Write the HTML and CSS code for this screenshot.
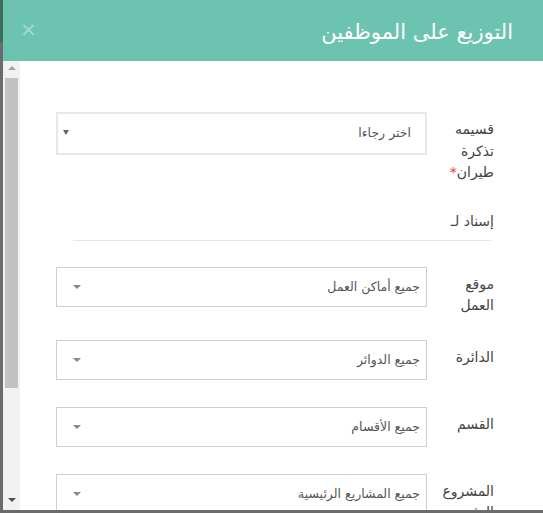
FILE: index.html
```html
<!DOCTYPE html>
<html lang="ar">
<head>
  <meta charset="UTF-8">
  <meta name="viewport" content="width=device-width, initial-scale=1.0">
  <title>التوزيع على الموظفين</title>
  <link rel="stylesheet" href="styles.css">
</head>
<body>
  <div class="modal">
    <div class="modal-header">
      <h4 class="modal-title">التوزيع على الموظفين</h4>
      <span class="close">&times;</span>
    </div>
    <div class="modal-body">
      <div class="scrollbar">
        <span class="arrow-up"></span>
        <div class="thumb"></div>
        <span class="arrow-down"></span>
      </div>
      <div class="content">
        <div class="row">
          <label class="label">قسيمه تذكرة طيران<span class="req">*</span></label>
          <div class="select select-main">
            <span class="value">اختر رجاءا</span>
            <span class="caret caret-small"></span>
          </div>
        </div>

        <div class="section">
          <div class="section-title">إسناد لـ</div>
          <div class="section-line"></div>
        </div>

        <div class="row">
          <label class="label">موقع العمل</label>
          <div class="select">
            <span class="value">جميع أماكن العمل</span>
            <span class="caret"></span>
          </div>
        </div>
        <div class="row">
          <label class="label">الدائرة</label>
          <div class="select">
            <span class="value">جميع الدوائر</span>
            <span class="caret"></span>
          </div>
        </div>
        <div class="row">
          <label class="label">القسم</label>
          <div class="select">
            <span class="value">جميع الأقسام</span>
            <span class="caret"></span>
          </div>
        </div>
        <div class="row">
          <label class="label">المشروع الرئيسي</label>
          <div class="select">
            <span class="value">جميع المشاريع الرئيسية</span>
            <span class="caret"></span>
          </div>
        </div>
      </div>
    </div>
  </div>
</body>
</html>
```

FILE: styles.css
```css
body {
  margin: 0;
  height: 513px;
  overflow: hidden;
  background: linear-gradient(#3c6b5c 0, #3c6b5c 42px, #6b6b6b 42px);
  font-family: "DejaVu Sans", sans-serif;
}
.modal {
  margin-left: 3px;
  width: 540px;
  height: 510px;
  background: #fff;
  display: flex;
  flex-direction: column;
  overflow: hidden;
}
.modal-header {
  direction: rtl;
  height: 61px;
  flex: none;
  background: #6cc4b0;
  display: flex;
  align-items: center;
  justify-content: space-between;
  padding: 0 30px 0 17px;
  box-sizing: border-box;
}
.modal-title {
  margin: 2px 0 0;
  font-size: 21px;
  font-weight: normal;
  color: #fff;
}
.close {
  color: #a4dbcf;
  font-size: 20px;
  line-height: 1;
  margin-bottom: 4px;
}
.modal-body {
  flex: 1;
  display: flex;
  min-height: 0;
}

/* scrollbar drawn on the left, as an rtl page shows it */
.scrollbar {
  width: 17px;
  flex: none;
  background: #f1f1f1;
  display: flex;
  flex-direction: column;
  align-items: center;
  padding: 5px 0 8px;
  box-sizing: border-box;
}
.arrow-up,
.arrow-down {
  width: 0;
  height: 0;
  border-left: 4px solid transparent;
  border-right: 4px solid transparent;
}
.arrow-up {
  border-bottom: 4px solid #a3a3a3;
}
.arrow-down {
  margin-top: auto;
  border-top: 4px solid #505050;
}
.thumb {
  width: 13px;
  height: 310px;
  margin-top: 8px;
  background: #c1c1c1;
}

.content {
  flex: 1;
  direction: rtl;
  padding: 51px 49px 0 36px;
  overflow: hidden;
}
.row {
  display: grid;
  grid-template-columns: 60px 1fr;
  column-gap: 7px;
  margin-bottom: 27px;
}
.label {
  padding-top: 7px;
  margin-bottom: -4px;
  font-size: 14px;
  line-height: 21.5px;
  color: #444;
}
.req {
  color: #e33;
}
.select {
  height: 40px;
  border: 1px solid #cfcfcf;
  box-sizing: border-box;
  display: flex;
  align-items: center;
  justify-content: space-between;
  padding: 0 6px 0 16px;
  font-size: 12.5px;
  color: #555;
}
.select-main {
  height: 43px;
  border: 2px solid #e8e8e8;
  padding: 0 14px 0 5px;
  align-items: flex-start;
}
.select-main .value {
  margin-top: 11px;
}
.caret {
  width: 0;
  height: 0;
  border-left: 4px solid transparent;
  border-right: 4px solid transparent;
  border-top: 4px solid #888;
}
.caret-small {
  margin-top: 16px;
  border-left-width: 3px;
  border-right-width: 3px;
  border-top: 5px solid #666;
}
.section {
  padding-top: 4px;
  margin-bottom: 26px;
}
.section-title {
  font-size: 14px;
  color: #444;
  line-height: 20px;
}
.section-line {
  margin: 9px 3px 0 17px;
  border-top: 1px solid #e5e5e5;
}
```
